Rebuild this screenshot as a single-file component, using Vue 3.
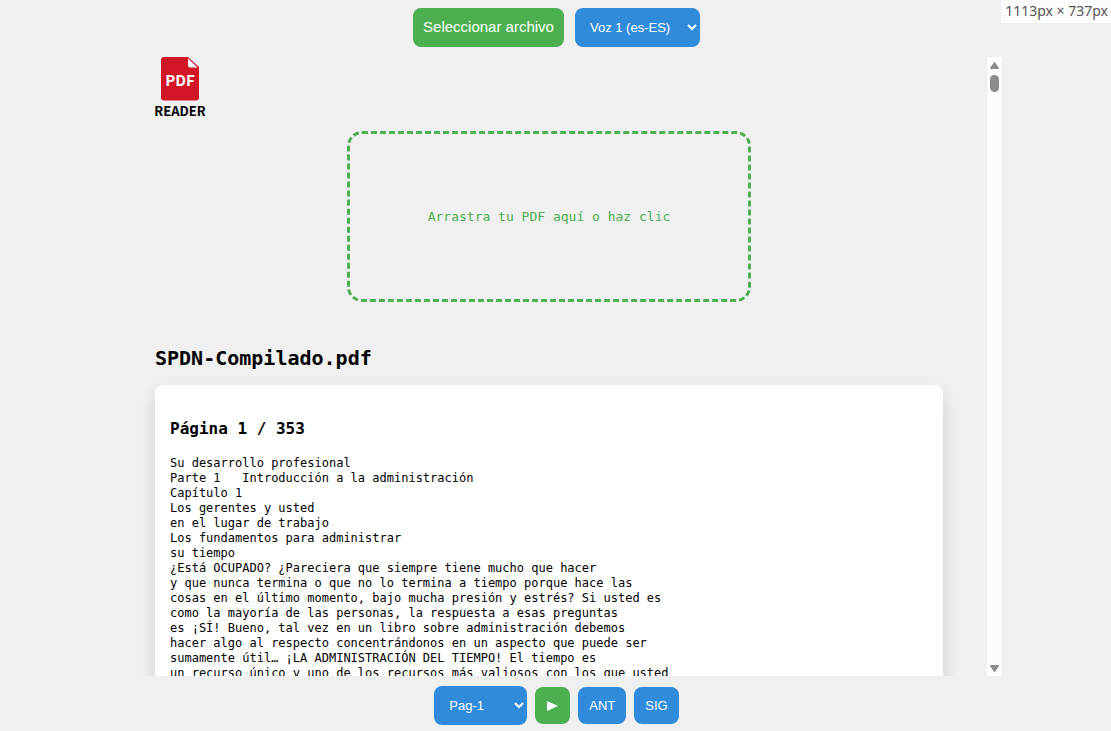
<script setup>
import { ref } from 'vue'

const voices = ['Voz 1 (es-ES)']
const pages = ['Pag-1']
const voice = ref(voices[0])
const page = ref(pages[0])

const pageText = `Su desarrollo profesional
Parte 1   Introducción a la administración
Capítulo 1
Los gerentes y usted
en el lugar de trabajo
Los fundamentos para administrar
su tiempo
¿Está OCUPADO? ¿Pareciera que siempre tiene mucho que hacer
y que nunca termina o que no lo termina a tiempo porque hace las
cosas en el último momento, bajo mucha presión y estrés? Si usted es
como la mayoría de las personas, la respuesta a esas preguntas
es ¡SÍ! Bueno, tal vez en un libro sobre administración debemos
hacer algo al respecto concentrándonos en un aspecto que puede ser
sumamente útil… ¡LA ADMINISTRACIÓN DEL TIEMPO! El tiempo es
un recurso único y uno de los recursos más valiosos con los que usted`
</script>

<template>
  <div class="app">
    <header class="bar top">
      <button type="button" class="btn green file">Seleccionar archivo</button>
      <select v-model="voice" class="select voice" aria-label="Voz">
        <option v-for="v in voices" :key="v">{{ v }}</option>
      </select>
    </header>

    <div class="viewer">
      <main class="scroller">
        <svg class="logo" width="52" height="62" viewBox="0 0 52 62" role="img" aria-label="PDF Reader">
          <path d="M9 0H33L44 10V40.500Q44 43.500 41 43.500H9Q6 43.500 6 40.500V3Q6 0 9 0Z" fill="#d31626" />
          <path d="M33 1.500V8.500Q33 10.500 35 10.500H42.500Z" fill="#fff" />
          <text x="25" y="29" class="logo-pdf">PDF</text>
          <text x="25" y="59" class="logo-reader">READER</text>
        </svg>

        <button type="button" class="drop">Arrastra tu PDF aquí o haz clic</button>

        <h2 class="title">SPDN-Compilado.pdf</h2>

        <article class="sheet">
          <h3 class="heading">Página 1 / 353</h3>
          <pre class="text">{{ pageText }}</pre>
        </article>
      </main>
      <div class="track" aria-hidden="true">
        <svg width="15" height="17" viewBox="0 0 15 17"><path d="M7.500 5Q8 5 8.500 6L12 11Q12 12 11 12H4Q3 12 3 11L6.500 6Q7 5 7.500 5Z" fill="#8b8b8b" /></svg>
        <div class="thumb"></div>
        <svg class="down" width="15" height="15" viewBox="0 0 15 15"><path d="M7.500 11Q7 11 6.500 10L3 5Q3 4 4 4H11Q12 4 12 5L8.500 10Q8 11 7.500 11Z" fill="#8b8b8b" /></svg>
      </div>
    </div>

    <footer class="bar bottom">
      <select v-model="page" class="select page" aria-label="Página">
        <option v-for="p in pages" :key="p">{{ p }}</option>
      </select>
      <button type="button" class="btn green small play" aria-label="Reproducir">
        <svg width="11" height="10" viewBox="0 0 11 10"><path d="M0 0L11 5L0 10Z" fill="#fff" /></svg>
      </button>
      <button type="button" class="btn blue small">ANT</button>
      <button type="button" class="btn blue small">SIG</button>
    </footer>

    <div class="size">1113px × 737px</div>
  </div>
</template>

<style>
body {
  background: #f0f0f0;
}
</style>

<style scoped>
.app {
  display: flex;
  flex-direction: column;
  height: 100vh;
  box-sizing: border-box;
  background: #f0f0f0;
  color: #000;
  font-family: "DejaVu Sans Mono", monospace;
}
.bar {
  display: flex;
  align-items: center;
  justify-content: center;
  flex: none;
}
.top {
  gap: 11px;
  padding: 8px 0 10px 2px;
}
.bottom {
  gap: 8px;
  padding: 10px 0 6px 2px;
}
.btn,
.select {
  border: 0;
  border-radius: 8px;
  color: #fff;
  font-family: "Liberation Sans", Arial, sans-serif;
  cursor: pointer;
}
.btn {
  padding: 0 11px 1px;
}
.green {
  background: #4caf50;
}
.blue {
  background: #308cdb;
}
.file {
  height: 39px;
  padding: 0 10px 2px;
  font-size: 15px;
}
.small {
  height: 37px;
  font-size: 13px;
}
.play {
  display: flex;
  align-items: center;
  padding: 0 12px;
}
.select {
  height: 39px;
  padding: 0 11px;
  background-color: #308cdb;
  font-size: 13px;
}
.voice {
  width: 125px;
}
.page {
  width: 93px;
}
.viewer {
  display: flex;
  flex: 1;
  min-height: 0;
  margin: 0 109px;
}
.scroller {
  flex: 1;
  min-width: 0;
  overflow: hidden;
  padding: 0 44px 0 46px;
}
.logo {
  display: block;
  overflow: visible;
}
.logo text {
  font-family: "Noto Sans CJK JP", sans-serif;
  font-weight: 700;
  text-anchor: middle;
}
.logo-pdf {
  font-size: 15px;
  fill: #fff;
}
.logo-reader {
  font-size: 13px;
  fill: #000;
}
.drop {
  display: block;
  box-sizing: border-box;
  width: 404px;
  max-width: 100%;
  height: 171px;
  margin: 12px auto 0;
  border: 3px dashed #4caf50;
  border-radius: 15px;
  background: transparent;
  color: #4caf50;
  font-family: inherit;
  font-size: 13px;
  cursor: pointer;
}
.title {
  margin: 44px 0 15px;
  font-size: 20px;
  line-height: 24px;
}
.sheet {
  padding: 34px 15px 15px;
  border-radius: 8px;
  background: #fff;
  box-shadow: 0 8px 16px rgba(0, 0, 0, 0.15);
}
.heading {
  margin: 0 0 17px;
  font-size: 16px;
  line-height: 20px;
}
.text {
  margin: 0;
  font-family: inherit;
  font-size: 12px;
  line-height: 15px;
}
.track {
  display: flex;
  flex-direction: column;
  flex: none;
  width: 15px;
  background: #fcfcfc;
}
.thumb {
  width: 9px;
  height: 17px;
  margin: 1px 3px;
  border-radius: 5px;
  background: #8b8b8b;
}
.down {
  margin-top: auto;
}
.size {
  position: absolute;
  top: 0;
  right: 0;
  padding: 2px 3px 3px 4px;
  background: #fcfcfc;
  color: #555;
  font-family: "Noto Sans", sans-serif;
  font-size: 14px;
  line-height: 18px;
}
</style>
